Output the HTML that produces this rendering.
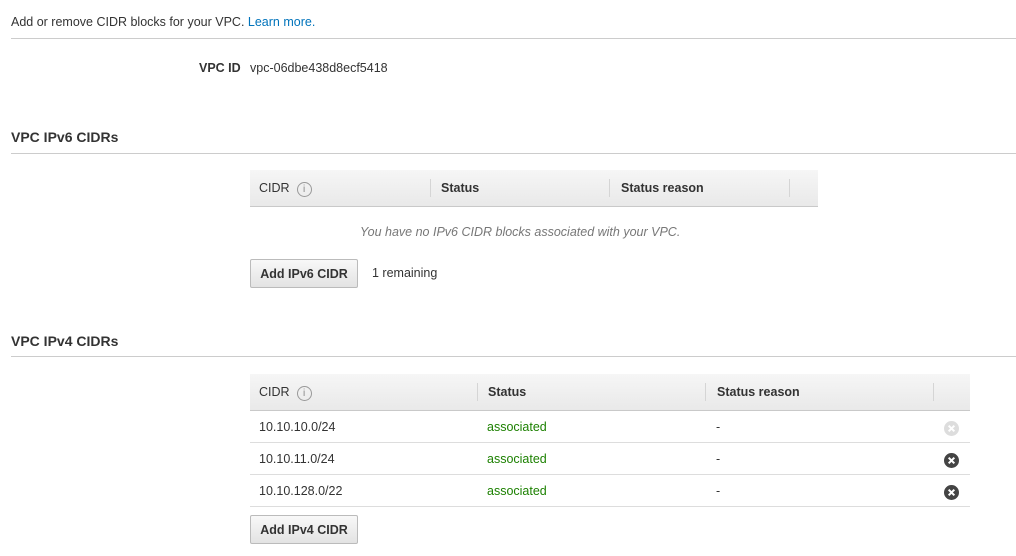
<!DOCTYPE html>
<html><head><style>
body{margin:0;background:#fff;font-family:"Liberation Sans",Arial,sans-serif;font-size:12.5px;color:#333;width:1016px;height:556px;overflow:hidden;position:relative}
.a{position:absolute}
.hr{position:absolute;left:11px;right:0;height:1px;background:#ccc}
h3{position:absolute;margin:0;font-size:14px;font-weight:bold;color:#333;left:11px}
.th{position:absolute;background:linear-gradient(#f6f6f6,#e9e9e9);border-bottom:1px solid #c9c9c9;font-weight:bold;color:#333}
.sep{position:absolute;top:9px;width:1px;height:18px;background:#d5d5d5}
.btn{position:absolute;left:250px;width:106px;height:27px;border:1px solid #bbb;border-radius:2px;background:linear-gradient(#f8f8f8,#e3e3e3);font-weight:bold;line-height:28px;text-align:center}
.row{position:absolute;left:250px;width:720px;height:31px;border-bottom:1px solid #ddd;line-height:33px}
.x{position:absolute;left:694px;top:10px;width:15px;height:15px}
.i{display:inline-block;width:13px;height:13px;border:1px solid #999;border-radius:50%;font-size:10px;line-height:13px;text-align:center;color:#888;font-weight:normal;margin-left:7px;vertical-align:0px}
.g{color:#1d8102}
</style></head><body>
<div class="a" style="left:11px;top:15px">Add or remove CIDR blocks for your VPC. <span style="color:#0073bb">Learn more.</span></div>
<div class="hr" style="top:38px"></div>
<div class="a" style="left:199px;top:61px;font-weight:bold">VPC ID</div>
<div class="a" style="left:250px;top:61px">vpc-06dbe438d8ecf5418</div>

<h3 style="top:129px">VPC IPv6 CIDRs</h3>
<div class="hr" style="top:153px"></div>
<div class="th" style="left:250px;top:170px;width:568px;height:36px;line-height:36px">
<span class="a" style="left:9px;font-weight:normal">CIDR<span class="i">i</span></span>
<div class="sep" style="left:180px"></div><span class="a" style="left:191px">Status</span>
<div class="sep" style="left:359px"></div><span class="a" style="left:371px">Status reason</span>
<div class="sep" style="left:539px"></div></div>
<div class="a" style="left:360px;top:225px;font-style:italic;color:#777">You have no IPv6 CIDR blocks associated with your VPC.</div>
<div class="btn" style="top:259px">Add IPv6 CIDR</div>
<div class="a" style="left:372px;top:266px">1 remaining</div>

<h3 style="top:333px">VPC IPv4 CIDRs</h3>
<div class="hr" style="top:356px"></div>
<div class="th" style="left:250px;top:374px;width:720px;height:36px;line-height:36px">
<span class="a" style="left:9px;font-weight:normal">CIDR<span class="i">i</span></span>
<div class="sep" style="left:227px"></div><span class="a" style="left:238px">Status</span>
<div class="sep" style="left:455px"></div><span class="a" style="left:467px">Status reason</span>
<div class="sep" style="left:683px"></div></div>
<div class="row" style="top:411px"><span class="a" style="left:9px">10.10.10.0/24</span><span class="a g" style="left:237px">associated</span><span class="a" style="left:466px">-</span><svg class="x" viewBox="0 0 16 16"><circle cx="8" cy="8" r="8" fill="#ddd"/><path d="M5 5L11 11M11 5L5 11" stroke="#fff" stroke-width="2.2"/></svg></div>
<div class="row" style="top:443px"><span class="a" style="left:9px">10.10.11.0/24</span><span class="a g" style="left:237px">associated</span><span class="a" style="left:466px">-</span><svg class="x" viewBox="0 0 16 16"><circle cx="8" cy="8" r="8" fill="#444"/><path d="M5 5L11 11M11 5L5 11" stroke="#fff" stroke-width="2.2"/></svg></div>
<div class="row" style="top:475px"><span class="a" style="left:9px">10.10.128.0/22</span><span class="a g" style="left:237px">associated</span><span class="a" style="left:466px">-</span><svg class="x" viewBox="0 0 16 16"><circle cx="8" cy="8" r="8" fill="#444"/><path d="M5 5L11 11M11 5L5 11" stroke="#fff" stroke-width="2.2"/></svg></div>
<div class="btn" style="top:515px">Add IPv4 CIDR</div>
</body></html>
